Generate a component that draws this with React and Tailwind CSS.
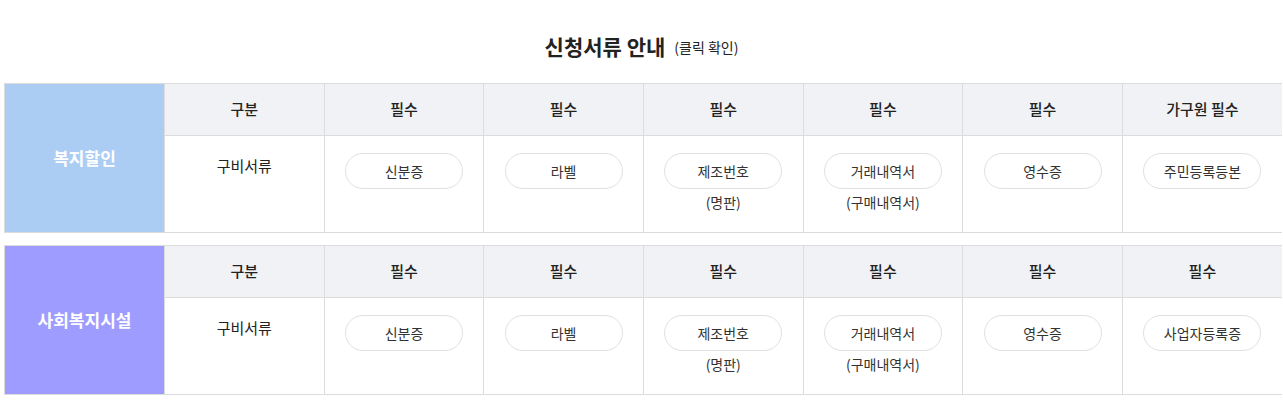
import React from 'react';

const FONT = { fontFamily: '"Noto Sans CJK KR", "Noto Sans", sans-serif' };

const sections = [
  {
    label: '복지할인',
    color: 'bg-[#abcdf4]',
    heads: ['필수', '필수', '필수', '필수', '필수', '가구원 필수'],
    docs: [
      { name: '신분증' },
      { name: '라벨' },
      { name: '제조번호', sub: '(명판)' },
      { name: '거래내역서', sub: '(구매내역서)' },
      { name: '영수증' },
      { name: '주민등록등본' },
    ],
  },
  {
    label: '사회복지시설',
    color: 'bg-[#9e9dff]',
    heads: ['필수', '필수', '필수', '필수', '필수', '필수'],
    docs: [
      { name: '신분증' },
      { name: '라벨' },
      { name: '제조번호', sub: '(명판)' },
      { name: '거래내역서', sub: '(구매내역서)' },
      { name: '영수증' },
      { name: '사업자등록증' },
    ],
  },
];

function DocTable({ section }) {
  return (
    <table className="border-collapse table-fixed w-[1278px] text-[#222]">
      <colgroup>
        <col className="w-[160px]" />
        {Array.from({ length: 7 }).map((_, i) => (
          <col key={i} />
        ))}
      </colgroup>
      <tbody>
        <tr className="h-[52px]">
          <td
            rowSpan={2}
            className={`${section.color} border border-[#dcdcdc] text-center align-middle text-white text-[17px] font-bold`}
          >
            {section.label}
          </td>
          <th className="bg-[#f0f2f5] border border-[#dcdcdc] text-[15px] font-medium">구분</th>
          {section.heads.map((h, i) => (
            <th key={i} className="bg-[#f0f2f5] border border-[#dcdcdc] last:border-r-0 text-[15px] font-medium">
              {h}
            </th>
          ))}
        </tr>
        <tr className="h-[97px]">
          <td className="border border-[#dcdcdc] align-top text-center pt-[15px]">
            <span className="block text-[15px] leading-[30px]">구비서류</span>
          </td>
          {section.docs.map((d, i) => (
            <td key={i} className="border border-[#dcdcdc] last:border-r-0 align-top pt-[17px]">
              <div className="flex flex-col items-center">
                <button className="w-[118px] h-[36px] rounded-full border border-[#e0e0e0] bg-white text-[14px] text-[#333]">
                  {d.name}
                </button>
                {d.sub && <span className="mt-[1px] text-[14px] leading-[24px] text-[#333]">{d.sub}</span>}
              </div>
            </td>
          ))}
        </tr>
      </tbody>
    </table>
  );
}

export default function App() {
  return (
    <div className="w-full overflow-hidden bg-white" style={FONT}>
      <h2 className="h-[30px] mt-[31px] mb-[22px] flex items-center justify-center gap-[9px] text-[#222]">
        <span className="text-[21px] font-bold leading-[30px]">신청서류 안내</span>
        <span className="text-[14px] leading-[30px] pt-[2px]">(클릭 확인)</span>
      </h2>
      <div className="pl-[4px] flex flex-col gap-[12px] pb-[12px]">
        {sections.map((s) => (
          <DocTable key={s.label} section={s} />
        ))}
      </div>
    </div>
  );
}
